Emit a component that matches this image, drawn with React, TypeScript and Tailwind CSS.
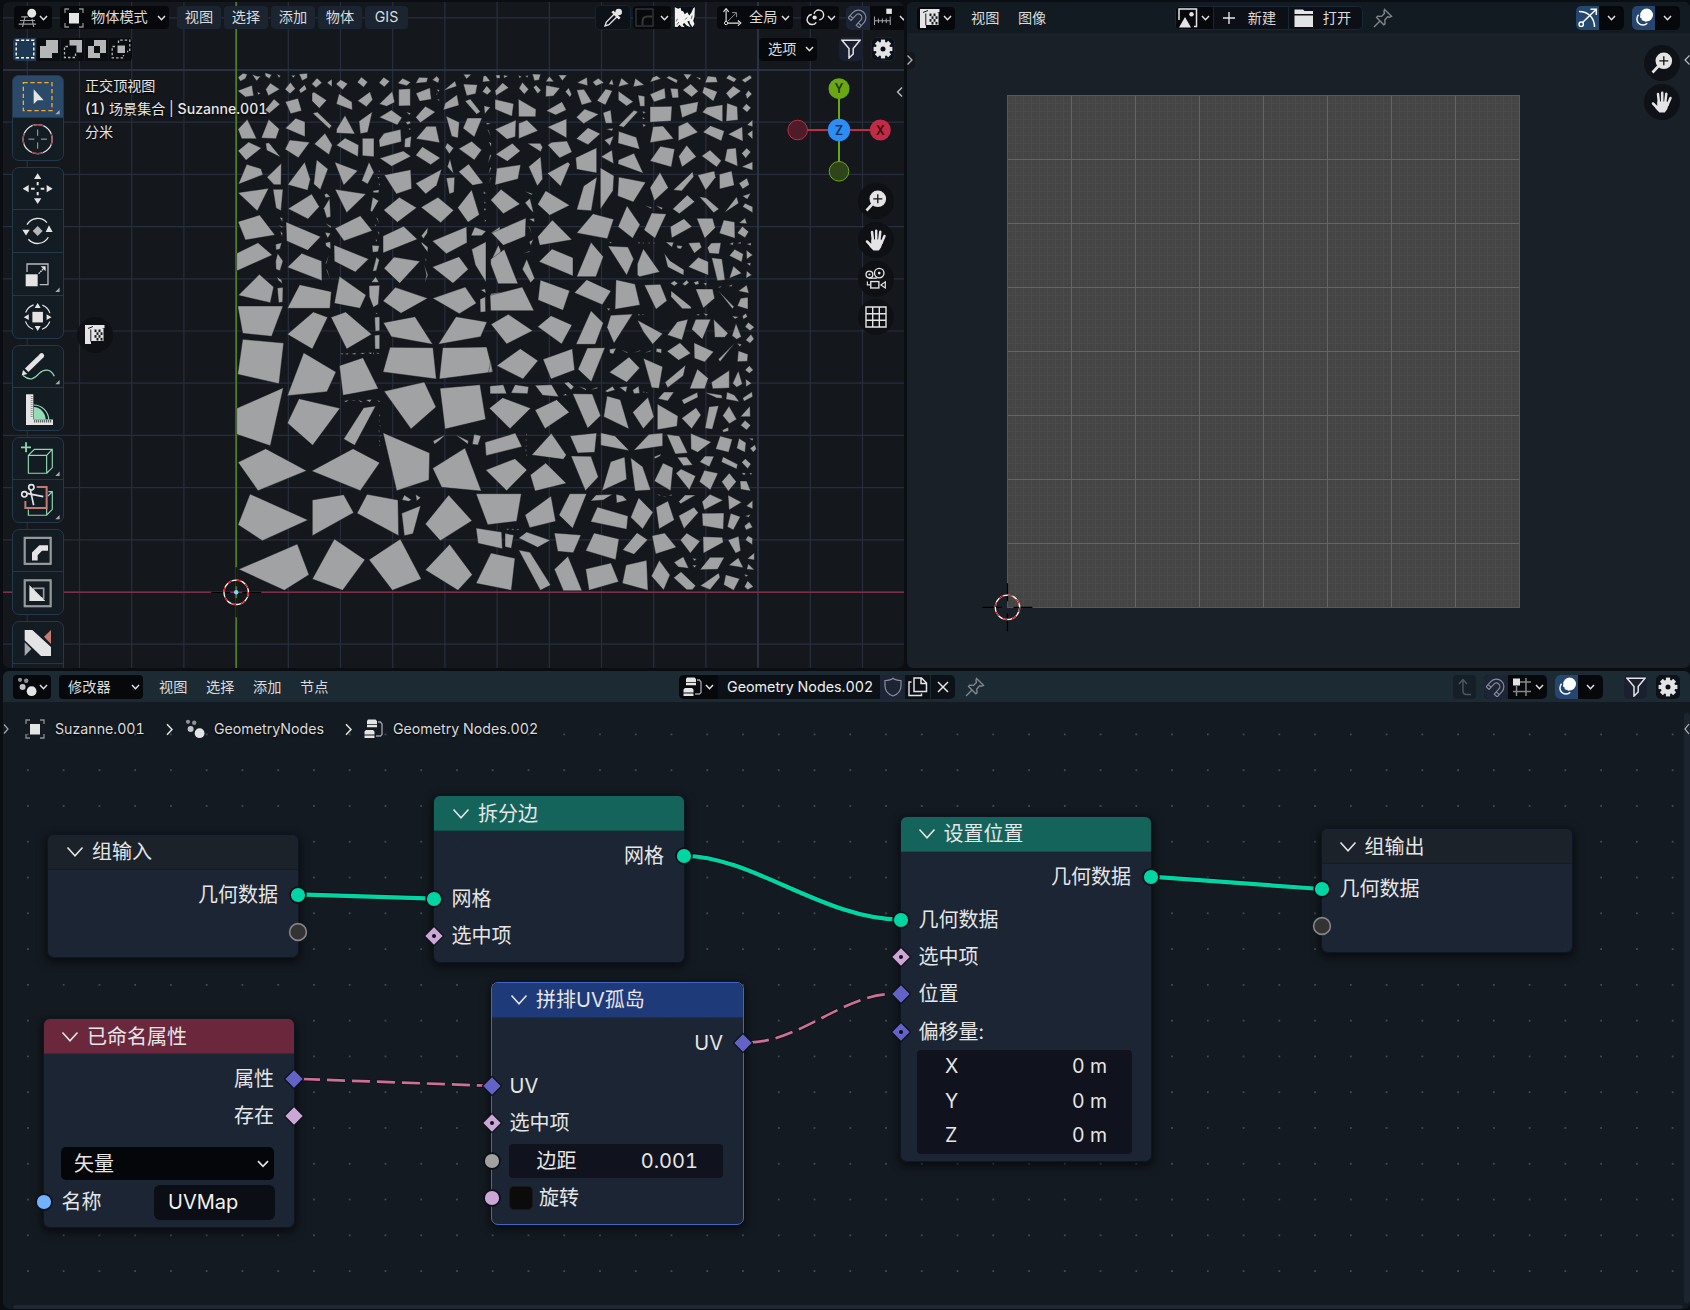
import type { ReactNode } from "react";

const INK = "#e4e4e4";

/* UV island outlines, grouped in four tiles; units are thirds of a pixel from each tile's origin. */
const TILE_A = `24,52 39,40 52,43 46,56 31,64|66,43 82,49 92,48 80,63|105,38 125,44 118,56 106,48|140,42 152,47 147,54|183,46 197,46 190,53|207,42 232,40 232,54 216,62 212,52|23,92 66,76 71,107 46,111|82,95 92,100 84,105|107,88 121,69 149,88 115,107|165,88 181,67 196,86 180,101|207,90 224,74 230,88 212,100|245,72 261,54 276,68 258,83|291,68 306,57 306,80|318,72 332,59 353,71 338,89|382,67 394,51 413,66 401,82|447,68 461,52 479,64 463,81|503,70 518,55 542,67 530,77|557,70 567,52 594,53 590,67|607,60 620,48 628,57 625,69|640,92 675,63 680,79|700,43 724,43 710,57|760,48 768,47 781,64 758,66|105,150 132,117 150,133 118,160|166,125 204,115 215,152 182,161|246,100 252,96 290,121 268,145 246,123|327,101 366,126 367,150 319,132|383,122 420,95 428,119 409,140|448,132 487,94 494,127 470,139|506,88 541,86 541,137 506,138|558,100 600,83 604,118 569,124|620,88 629,90 625,97|618,100 623,101 620,105|620,118 628,118 628,124|700,72 742,74 737,101 710,107|640,150 645,130 681,104 687,136|705,123 721,117 751,155 740,163|757,95 770,77 784,93 772,104|762,137 781,142 764,162|24,208 52,178 80,236 35,236|94,234 116,178 148,207 138,236|166,205 197,175 225,185 225,230|248,160 262,156 305,197 298,206|320,207 345,166 375,222 319,219|387,184 427,155 413,217 391,221|448,172 484,150 516,173 502,195|528,155 543,160 538,165|527,187 538,183 543,189 533,194|536,203 543,207 538,211|557,172 586,139 616,156 571,188|558,236 590,199 618,199 629,248|447,240 462,220 512,208 514,245 449,262|525,236 544,229 541,262 523,262|648,168 688,187 684,234 665,229|699,205 712,174 756,174 733,231|24,272 56,246 94,264 48,301|107,250 117,248 152,292 110,271|165,268 179,240 239,247 205,293|253,252 285,220 307,255 297,284|319,256 345,234 386,255 384,290|397,235 432,235 432,290 397,287|449,295 520,273 543,289 485,319|557,286 577,260 631,294 602,314|645,262 652,249 671,264 658,282|686,266 725,244 755,270 733,300|768,188 784,190 771,194|772,208 776,210 784,234|776,245 784,249 783,262|780,283 784,287 774,310|781,320 784,325 775,344|782,350 783,355 775,374|25,373 50,313 93,326 99,344|111,352 154,310 153,374 132,374|173,374 224,306 241,358 233,391|260,299 294,327 271,389 251,372|314,306 383,332 341,376|395,362 417,306 432,337 413,372|463,345 542,329 545,386 499,402|557,370 635,328 620,376 587,402|652,320 660,296 671,341|649,354 674,352 672,397 658,402|686,335 716,312 760,370 728,376|443,332 450,332 450,336|441,350 449,352 446,356|444,370 450,372 450,378|428,392 447,389 446,398 431,398|24,398 116,385 82,453|129,388 159,388 153,452 138,444|174,446 245,402 268,440 234,477|283,404 290,400 301,410 287,413|281,445 299,415 302,470 290,474|315,388 408,402 350,458|428,412 446,422 426,456 421,452|461,450 508,412 560,443 502,487|573,442 624,412 671,451 632,488|683,443 725,389 748,464 714,487|760,394 768,399 762,403|764,424 768,429 762,431|762,444 769,448 763,453|764,478 769,482 764,487|783,420 810,398 810,440|24,485 89,465 135,525 46,540|149,472 158,474 157,486|145,494 158,500 156,504|150,512 158,520 156,530|137,553 155,548 150,567 138,570|168,486 272,530 233,571 170,543|286,489 304,499 301,503|285,517 302,520 293,535|286,548 301,545 302,567 288,558|298,580 290,610 286,612|288,628 292,630 302,662|315,505 391,467 427,512 342,543|438,472 443,475 448,494|434,493 439,495 437,502|442,512 448,518 447,526|437,537 442,540 438,547|426,556 448,557 444,575 428,577|459,528 521,499 562,538 459,579|574,527 594,502 592,519 580,536|574,545 594,562 593,577 575,552|585,595 589,598 588,606|582,612 594,645 584,670 589,645|607,543 710,500 711,548 649,581|723,527 734,501 768,514 755,527|783,518 810,500 810,535|20,580 84,548 127,585 20,633|137,603 143,580 159,603 150,632 138,628|172,622 215,580 275,603 276,662|312,555 416,597 376,636 313,604|439,591 448,600 439,632 428,634|462,625 492,591 570,604 509,670|607,621 687,590 715,628 669,670|725,568 768,545 768,667 736,615|783,602 805,555 812,570 812,650|25,706 88,643 131,681 121,728|140,650 155,660 157,671 145,661|142,684 159,682 158,726 146,728|172,745 209,674 304,695 300,745|313,730 328,649 408,705 390,745|424,667 437,650 447,667|417,677 449,676 445,733 430,742 418,710|459,723 496,682 593,715 513,760|608,715 706,681 739,730 688,761|752,690 765,686 768,700|750,718 766,710 767,755 751,757|782,701 810,697 810,751 783,751|23,738 159,738 125,829 38,820|172,823 250,756 293,772 247,867|303,772 347,756 425,823 350,867|436,758 444,759 440,763|434,772 449,770 449,812 436,814|434,826 449,824 449,867 435,867|460,788 555,770 608,853 484,830|625,853 678,770 771,786 752,830`;

const TILE_B = `17,45 30,45 30,55 20,55|41,45 55,48 42,55|85,46 96,50 88,55|105,48 115,46 113,53|127,42 152,43 147,60 133,62|167,65 178,49 192,65|205,45 231,45 217,62|261,68 291,52 293,77|308,66 325,55 342,68 318,78|356,73 366,56 371,75|385,80 394,54 417,72|430,80 436,55 463,75|480,67 488,52 500,47 513,56|529,53 537,48 563,60 560,70|580,42 605,43 592,60|617,50 633,54 630,60|645,68 653,48 678,51 683,67|708,55 717,44 740,57 732,67|755,60 780,45 786,54 765,68|15,92 38,68 56,83 18,107|87,85 97,67 116,88 103,103|130,82 138,75 153,91 143,101|167,110 168,76 210,84 190,108|226,95 236,83 245,103 240,112|260,90 282,88 306,126 275,135|321,122 347,87 367,92 346,135|385,93 430,125 410,138 385,120|444,105 464,109 464,139 450,139|480,103 524,84 527,115 492,126|541,85 564,86 566,113 547,114|578,90 602,72 625,94 605,111|637,98 642,80 682,95 670,124|708,100 730,78 753,93 721,117|767,103 775,91 786,102 771,117|15,118 71,131 66,169 15,148|85,117 138,148 137,170 86,170|169,152 216,125 229,150 197,165|259,172 284,147 326,163 281,191|339,158 362,150 367,190 347,190|386,197 432,151 444,155 401,202|457,153 468,157 460,161|457,170 466,176 458,178|457,192 468,194 461,202|480,140 546,139 543,183 480,187|569,136 625,125 620,155 576,173|637,157 650,142 698,134 698,186|711,129 742,140 744,180 708,184|757,145 769,131 783,143 771,157|15,208 78,180 76,230 51,238|86,190 111,180 144,212 86,236|172,201 230,176 230,234|259,236 294,203 331,221 294,254|348,207 370,205 366,213|343,240 371,228 360,257|386,214 439,232 449,268 384,250|480,248 489,200 519,198 551,236|565,199 592,186 624,217 565,242|639,217 661,197 703,213 694,243|714,223 757,200 759,244|771,195 788,179 788,200|772,222 788,210 788,238|17,283 67,250 91,273 52,304|112,250 151,250 158,262 152,275|173,255 185,247 231,243 246,276 209,294|257,293 320,263 320,339 260,328|333,290 366,270 371,311|385,300 432,280 460,340 384,312|480,303 511,259 554,267 544,321|566,289 590,256 619,290 576,321|635,288 660,270 694,302 680,321|704,302 711,267 738,264 743,319|755,280 770,264 782,276 767,295|755,320 788,305 788,331|15,375 20,325 92,314 84,357|116,320 152,290 158,357 142,378|172,340 234,306 240,313 212,379|260,449 281,378 321,351 304,452|331,323 372,347 369,392 331,448|386,351 467,367 430,426 383,408|480,383 510,337 535,383 493,422|550,390 608,335 611,350 575,393|623,345 673,333 677,352 647,391|688,343 725,333 733,376 689,387|747,370 771,354 778,374 758,387|2,420 33,388 90,432 40,461|103,393 128,401 124,405|105,428 120,415 131,459 122,450|143,433 167,392 239,436 179,466|463,436 485,442 484,446|497,436 518,443 515,449|548,447 592,405 614,425 568,461|628,410 648,413 687,447 671,458|703,458 740,410 746,430|757,408 782,400 772,418|758,440 765,430 788,440 788,458|5,519 108,474 106,529 40,556|117,477 133,475 133,487|115,497 119,500 126,524|118,545 130,538 122,557|97,581 120,572 119,576|143,530 187,480 246,539 149,556|260,519 309,461 371,478 352,536|384,500 411,437 450,494 428,535|462,510 485,459 529,462 495,535|541,500 582,476 606,500 545,534|620,475 668,475 676,503 644,535|688,520 701,480 734,486 735,535|747,489 765,474 771,491|742,519 757,499 776,515 765,533|355,545 367,547 362,550|443,547 450,547 448,552|457,547 463,549 460,551|475,547 481,549 477,552|488,547 495,549 492,552|527,546 551,547 546,562|560,556 578,558 572,567 562,565|595,549 629,547 635,562 613,580|652,563 664,549 693,548 687,582 658,580|718,552 730,546 729,556|742,550 752,545 753,552|770,552 783,548 783,557|2,598 43,568 84,671 24,671 2,612|97,628 110,597 134,655 122,668|147,605 186,567 249,593 249,648|260,650 303,547 340,590 318,650|354,558 414,561 431,597 410,646|442,612 460,566 509,636 449,650 442,645|523,580 540,602 582,629 581,646 533,621|595,621 625,592 655,605 655,646|665,593 696,597 705,660 682,662|718,587 734,568 760,582 755,606|769,570 788,585 770,598|770,610 783,608 780,618|718,655 730,618 755,640|768,655 770,632 785,645|2,752 0,706 97,681 132,752|144,720 151,660 239,692 219,751|253,698 290,659 363,693 337,734|350,745 361,745 357,752|375,748 378,659 435,672 450,735|463,675 511,673 531,722 498,748|541,670 553,662 564,670 553,678|577,672 590,660 597,668 585,677|611,667 625,662 627,672 617,675|640,670 651,668 648,677|543,692 603,740 604,746 577,746 543,710|617,687 668,687 674,715 640,744|683,683 696,676 690,683|715,678 728,673 724,680|683,690 732,740 727,746|745,693 770,675 777,700|742,738 752,715 774,712 774,748|3,793 55,763 128,812 50,852|143,800 183,767 246,795 215,852|258,853 303,752 340,789 316,853|351,802 362,766 428,762 372,850|442,780 518,821 488,853 460,815|532,825 562,785 594,778 576,840|605,808 617,778 662,778 637,838|671,778 714,820 704,832 674,832|726,827 738,790 754,830 740,838|443,762 450,763 447,767|455,762 464,764 458,766|618,762 630,763 625,767|640,760 655,763 648,768|726,768 747,770 735,777|757,768 768,760 772,770 760,778|765,800 775,787 793,802 780,812`;

const TILE_C = `38,58 161,69 147,191 23,163|172,227 221,98 318,156 291,215|328,137 399,113 445,206 339,226|328,100 340,100 338,104|344,101 357,99 352,104|363,101 378,98 376,104|388,99 407,98 398,103|414,98 426,97 422,103|430,95 433,103 429,103|437,98 448,99 445,103|459,156 480,82 609,83 619,177|628,177 638,83 770,81 789,156|20,265 160,203 121,377 20,343|172,309 207,236 330,265 248,376|342,243 357,239 348,247|362,243 378,239 372,243|382,238 399,246 392,247|407,240 425,238 420,247|440,240 450,243 448,247|341,357 401,263 437,258 374,376|447,283 451,285 448,292|446,300 449,302 449,308|447,315 452,317 451,321|446,329 449,332 447,339|449,345 452,346 450,353|446,360 450,362 448,368|448,373 451,376 449,381|462,214 583,186 618,261 543,327|630,205 750,194 767,298 645,327|779,200 810,197 810,221 782,221|609,363 648,343 630,360 614,373|674,343 715,362 714,373|732,343 753,347 744,375 727,373|24,427 107,386 230,452 84,512|245,453 369,386 449,428 391,512|459,338 599,399 597,480 500,512|608,445 705,384 754,513 635,502|24,614 60,522 234,600 97,662|247,540 341,524 371,578 247,647|381,580 411,523 504,540 506,647|516,540 523,525 545,540 535,544|557,523 572,533 560,543|515,580 572,557 549,641 523,647|586,612 656,525 726,602 631,662|26,748 202,672 237,764 163,811|247,777 313,657 405,719 338,811|417,719 511,657 574,777 487,811|586,750 659,673 727,764 684,811`;

const TILE_D = `-2,265 38,233 122,265 60,326|-15,367 76,339 96,380 -12,407|-13,450 75,416 111,450 50,512|-42,521 94,521 80,604 -7,614|-42,624 0,631 35,636 37,686 -36,670|-42,790 3,699 75,715 64,811|20,137 91,86 144,122 99,177|2,118 7,155 -5,158 0,137|159,118 247,86 254,150 183,177|264,148 292,84 345,83 304,185|358,157 417,111 449,144 410,187|460,115 518,140 507,205 485,203|525,187 587,135 580,167 533,203|358,88 378,85 370,102 360,100|391,88 413,97 412,100|428,99 453,90 450,94|462,98 486,90 480,95|500,85 515,87 514,100 498,95|531,94 570,68 602,100 566,121|612,68 671,95 644,126 613,115|685,118 735,68 690,125|741,70 755,73 750,80|742,125 745,92 774,103 772,124|599,206 622,147 655,175 644,206|664,187 718,151 718,204 668,206|728,190 745,152 757,192 740,202|765,150 778,137 790,150 778,160|767,177 785,190 768,200|0,198 40,194 50,221 0,221|63,219 75,194 116,200 113,221|135,196 185,194 206,230 158,226|222,188 236,186 252,200 243,210|218,227 226,221 233,226|264,198 289,206 287,211|300,209 325,200 320,206|345,213 368,199 375,210 352,217|388,202 412,199 408,217|428,210 446,198 449,220 432,221|459,213 465,217 461,219|468,216 474,217 470,220|135,270 200,239 238,277 165,326|248,221 307,222 332,287 293,325|341,290 351,228 391,239 417,327|428,277 474,232 492,290 460,326|502,252 564,288 561,319 502,329|504,236 522,216 552,216 533,243|575,240 622,217 624,232 582,253|575,295 618,263 633,285 605,326|645,325 657,260 686,257 667,328|643,217 695,225 697,235 680,234|708,238 711,216 733,225 748,245|758,234 786,215 788,230 762,244|698,287 717,258 740,298 718,311|751,290 780,258 781,290|752,316 765,301 782,316 770,330|697,330 715,322 716,333 700,337|125,405 184,340 229,405 220,418|240,347 320,339 314,397 263,399|332,338 375,348 418,392 332,376|431,391 477,343 518,339 518,378|530,343 568,348 593,399 556,402|602,340 664,366 623,397 603,387|677,387 690,348 727,358 716,397|740,385 747,355 768,368 765,397|780,385 795,374 799,387 790,397|776,355 790,355 788,362|108,340 111,343 109,350|106,357 111,360 108,364|108,375 111,378 107,380|105,388 110,390 108,395|109,402 112,405 109,410|121,465 167,429 229,490 135,513|243,408 303,409 325,471 286,512|336,512 362,425 404,411 410,478|422,413 458,440 482,510 435,513|492,410 513,402 511,408 495,416|493,483 519,429 549,443 542,512|558,460 573,447 617,468 598,510|562,412 590,411 608,435 580,437|629,426 645,408 672,409 658,440|628,485 643,451 684,460 661,510|694,426 699,410 743,433 740,447|695,485 718,459 739,485 715,514|755,427 766,416 783,432 773,446|755,460 762,458 768,461 762,466|777,459 787,459 783,465|750,483 770,483 782,513 752,508|105,585 183,528 197,604 119,623|207,585 239,521 290,521 248,625|302,543 318,525 368,523 340,540|378,523 398,527 411,541 380,549|302,605 322,561 414,588 410,628|422,592 446,533 489,577 458,627|498,562 534,543 553,600 507,627|566,545 585,525 617,525 572,551|566,587 612,562 625,578 582,626|498,523 510,524 512,528|515,527 530,530 527,532|533,527 547,523 545,527|636,545 660,523 699,541 643,570|636,580 702,579 700,628 638,617|714,525 755,547 717,570|712,620 722,580 751,590 730,630|769,558 788,541 788,567|765,588 782,583 776,592|763,618 778,605 788,622 768,630|48,626 58,626 54,631|63,626 73,627 69,631|78,627 88,627 84,631|45,640 71,645 64,685 45,680|86,654 110,636 181,661 143,682|193,639 273,645 250,698 203,694|287,692 312,639 387,657 377,719|398,690 441,638 473,659 432,703|486,647 524,639 559,682 497,702|571,660 590,639 630,664 601,700|639,650 697,652 700,667 640,700|714,660 746,649 752,692 737,700|766,660 774,647 788,655 787,674|86,690 120,697 182,795 151,811|193,748 234,709 276,812 220,812|287,747 363,729 386,785 297,811|397,790 408,735 470,721 474,811|484,768 508,721 540,765 521,810|552,727 580,710 596,745 565,741|607,714 620,717 613,723|607,736 620,735 614,743|551,773 573,755 617,797 607,809 590,809|630,749 660,712 703,712 683,748|631,797 686,759 690,772 660,809|701,794 707,764 749,776 731,811|716,736 745,713 760,743|772,716 793,698 793,720|770,748 775,731 793,750|762,762 775,766 768,771|763,800 773,782 790,800 773,809|767,60 783,43 792,57 780,70`;

const TILES = [
  { x: 230, y: 60, data: TILE_A },
  { x: 490, y: 60, data: TILE_B },
  { x: 230, y: 320, data: TILE_C },
  { x: 490, y: 320, data: TILE_D },
];

function Icon({ box, w, h, children, className = "" }: { box: string; w: number; h: number; children: ReactNode; className?: string }) {
  return (
    <svg viewBox={box} width={w} height={h} fill="none" className={`shrink-0 ${className}`}>
      {children}
    </svg>
  );
}

function Chevron({ className = "" }: { className?: string }) {
  return (
    <Icon box="0 0 9 6" w={9} h={6} className={className}>
      <path d="M1 1L4.5 4.7L8 1" stroke={INK} strokeWidth="1.4" />
    </Icon>
  );
}

function ObjectIcon() {
  return (
    <Icon box="0 0 20 20" w={20} h={20}>
      <path d="M1 5V1H5M15 1H19V5M19 15V19H15M5 19H1V15" stroke="#8b8f93" strokeWidth="1.3" />
      <rect x="5" y="5" width="10" height="10.5" fill={INK} />
    </Icon>
  );
}

function FilterIcon() {
  return (
    <Icon box="0 0 20 20" w={20} h={20}>
      <path d="M1 1.2H19L12.2 9.5V15L8 19V9.5Z" stroke={INK} strokeWidth="1.5" />
    </Icon>
  );
}

function GearIcon() {
  return (
    <Icon box="-10 -10 20 20" w={20} h={20}>
      {[0, 45, 90, 135].map((a) => (
        <rect key={a} x="-2.1" y="-9.4" width="4.2" height="18.8" fill={INK} transform={`rotate(${a})`} />
      ))}
      <circle r="4.9" stroke={INK} strokeWidth="4.8" fill="#0a0e13" />
    </Icon>
  );
}

function MagnetIcon() {
  return (
    <Icon box="0 0 20 20" w={20} h={20}>
      <g transform="rotate(42 10 10)" stroke="#858b96" strokeWidth="1.2">
        <path d="M2.5 16.5V9.5A7.5 7.5 0 0 1 17.5 9.5V16.5H13.5V9.5A3.5 3.5 0 0 0 6.5 9.5V16.5Z" />
        <path d="M2.5 13.5H6.5M13.5 13.5H17.5" />
      </g>
    </Icon>
  );
}

function PinIcon() {
  return (
    <Icon box="0 0 20 20" w={20} h={20}>
      <path d="M11.5 1.5L18.5 8.3L16.5 9.3L14.6 8.8L11.8 12L12 16L10.8 16.8L3.6 9.4L4.6 8.3L8.5 8.4L11.4 5.5L11 3.2ZM7 13L1 19" stroke="#81868b" strokeWidth="1.4" />
    </Icon>
  );
}

function OverlayIcon() {
  return (
    <Icon box="0 0 22 22" w={22} h={22}>
      <circle cx="13.6" cy="8" r="6.4" fill="#fff" />
      <path d="M5.6 7.8A6 6 0 1 0 14.2 16.2" stroke="#fff" strokeWidth="1.5" />
      <path d="M7.6 9A5.6 5.6 0 0 0 12.8 14.2" stroke="#fff" strokeWidth="1.1" strokeDasharray="2 1.4" />
    </Icon>
  );
}

function NodesIcon() {
  return (
    <Icon box="0 0 20 20" w={20} h={20}>
      <circle cx="3" cy="2.8" r="2.1" fill="#8d9095" />
      <circle cx="9.2" cy="3.8" r="2.2" fill="#8d9095" />
      <circle cx="5.6" cy="10" r="3" fill="#c0c2c4" />
      <circle cx="14.6" cy="14.2" r="4.9" fill={INK} />
    </Icon>
  );
}

function GroupIcon() {
  return (
    <Icon box="0 0 20 20" w={20} h={20}>
      <path d="M4 0.5H11.5L13 2V5H3V2Z M3 5.8H13V8.2H3Z" fill={INK} />
      <path d="M2 11H9L10.5 12.5V15.5H0.5V12.5Z M0.5 16.5H10.5V19H0.5Z" fill={INK} />
      <path d="M14 3H16.5L18 5V15.5L16.5 17H12" stroke="#999da1" strokeWidth="1.4" />
    </Icon>
  );
}

function UvIcon() {
  return (
    <Icon box="0 0 20 19" w={20} h={19}>
      <path d="M0 0H19.5V3L14 5V16H6V19H0Z" fill={INK} />
      <path d="M3 3.5L8 1.5" stroke="#15191e" strokeWidth="1" />
      <rect x="7" y="4" width="11.5" height="12" fill={INK} />
      {[0, 1, 2, 3].map((r) => [0, 1].map((c) => <rect key={`${r}${c}`} x={9.5 + c * 4 + (r % 2) * 2} y={4.5 + r * 2.8} width="2" height="2.6" fill="#15191e" />))}
      <path d="M5.8 4.5V16.5" stroke="#15191e" strokeWidth="1" />
    </Icon>
  );
}

function ZoomIcon() {
  return (
    <Icon box="0 0 22 22" w={22} h={22}>
      <circle cx="12.8" cy="8.8" r="8.3" fill={INK} />
      <path d="M7.5 14L1.5 20.5" stroke={INK} strokeWidth="2.6" />
      <path d="M12.8 4.3V13.3M8.3 8.8H17.3" stroke="#111" strokeWidth="1.3" />
    </Icon>
  );
}

function HandIcon() {
  return (
    <Icon box="0 0 22 22" w={22} h={22}>
      <g stroke={INK} strokeWidth="2.5" strokeLinecap="round">
        <path d="M7 3L8 12M11.2 1.8V12M15.3 2.8L14.2 12M19.5 7L16.5 14M2 12.5L6.5 17" />
      </g>
      <path d="M6.2 10.5H16L18 13L16 18.5L13.8 21.5H8.5L5 18L3 14.5L6.2 15Z" fill={INK} />
    </Icon>
  );
}

function RoundButton({ children }: { children: ReactNode }) {
  return <div className="flex h-[36px] w-[36px] items-center justify-center rounded-full bg-[#0d1014]/90">{children}</div>;
}

function MenuChip({ children, w }: { children: ReactNode; w: string }) {
  return <div className={`flex h-[23px] items-center justify-center rounded-[4px] bg-[#1b2531] ${w}`}>{children}</div>;
}

/* ---------- 3D viewport ---------- */

function ViewportCanvas() {
  const steps = Array.from({ length: 18 }, (_, i) => i);
  return (
    <svg className="absolute inset-0" width="901" height="666" viewBox="3 2 901 666">
      <g stroke="#262e3e" strokeWidth="1.2">
        {steps.map((i) => (
          <path key={`v${i}`} d={`M${27.3 + i * 52.2} 2V668`} />
        ))}
        {steps.slice(0, 13).map((i) => (
          <path key={`h${i}`} d={`M3 ${17.8 + i * 52.2}H904`} />
        ))}
      </g>
      <path d="M758 2V668M3 70H904" stroke="#2d364a" strokeWidth="1.6" />
      <path d="M3 592.3H904" stroke="#7f2c46" strokeWidth="1.6" />
      <path d="M236.2 2V668" stroke="#4f7a26" strokeWidth="1.8" />
      {TILES.map((t) => (
        <g key={`${t.x}-${t.y}`} transform={`translate(${t.x} ${t.y}) scale(0.33333)`} fill="#a1a2a3" stroke="#0d0f12" strokeWidth="1.2">
          {t.data.split("|").map((p, i) => (
            <polygon key={i} points={p} />
          ))}
        </g>
      ))}
      <g transform="translate(236.2 592.3)" fill="none">
        <path d="M-25 0H-6M6 0H25M0 -25V-6M0 6V25" stroke="#000" strokeWidth="1.2" />
        <circle r="12.2" stroke="#fff" strokeWidth="1.3" />
        <circle r="12.2" stroke="#f00c0c" strokeWidth="1.3" strokeDasharray="4.8 4.8" />
        <circle r="2.2" fill="#7fd4ff" />
      </g>
      <g fontFamily="Inter" fontSize="12.5" fontWeight="600" textAnchor="middle">
        <path d="M839 89V171" stroke="#6aa813" strokeWidth="2" />
        <path d="M798 130H880" stroke="#c22b45" strokeWidth="2" />
        <circle cx="797.7" cy="130" r="9.8" fill="#4d1c28" stroke="#c22b45" />
        <circle cx="839" cy="171.3" r="9.8" fill="#2f4418" stroke="#6aa813" />
        <circle cx="839" cy="88.7" r="10.5" fill="#6aa813" />
        <circle cx="880.3" cy="130" r="10.5" fill="#c22b45" />
        <circle cx="839" cy="130" r="11.2" fill="#2c8df5" />
        <text x="839" y="93.2" fill="#22370a">Y</text>
        <text x="839" y="134.6" fill="#0f3158">Z</text>
        <text x="880.3" y="134.6" fill="#3d0c15">X</text>
      </g>
      <path d="M902 87.5L897.5 92L902 96.5" stroke="#c5c8cb" strokeWidth="1.2" fill="none" />
    </svg>
  );
}

const corner = (y: number) => <path d={`M180 ${y - 13}V${y}H167Z`} fill="#a9abad" />;

const TOOL_GROUPS: { box: string; active?: boolean; art: ReactNode }[][] = [
  [
    {
      box: "37 225 153 128",
      active: true,
      art: (
        <>
          <rect x="71" y="248" width="86" height="84" stroke="#f2aa32" strokeWidth="4" strokeDasharray="13 8" />
          <path d="M102 268V312L114 301H132Z" fill={INK} />
          {corner(343)}
        </>
      ),
    },
    {
      box: "37 353 153 129",
      art: (
        <>
          <circle cx="114" cy="417" r="44" stroke={INK} strokeWidth="4" />
          <circle cx="114" cy="417" r="44" stroke="#a8404a" strokeWidth="4" strokeDasharray="34.5 34.5" strokeDashoffset="17" />
          <path d="M86 417H104M124 417H142M114 388V407M114 427V446" stroke="#a9acae" strokeWidth="3" />
        </>
      ),
    },
  ],
  [
    {
      box: "37 502 153 128",
      art: (
        <>
          <path d="M114 521L103 538H125ZM114 613L103 596H125ZM69 567L87 556V578ZM159 567L141 556V578Z" fill={INK} />
          <path d="M114 547V557M114 577V587M94 567H105M123 567H134" stroke={INK} strokeWidth="6" />
        </>
      ),
    },
    {
      box: "37 630 153 128",
      art: (
        <>
          <path d="M114 678L129 693L114 708L99 693Z" fill="#b5b6b8" />
          <path d="M82 674A37 37 0 0 1 142 668M146 712A37 37 0 0 1 86 718" stroke={INK} strokeWidth="4" />
          <path d="M68 689H90L79 707ZM148 676L138 696H159Z" fill={INK} />
        </>
      ),
    },
    {
      box: "37 758 153 128",
      art: (
        <>
          <path d="M82 815V791H145V853H120" stroke="#b9babc" strokeWidth="4" />
          <rect x="78" y="822" width="36" height="36" fill={INK} />
          <path d="M117 820L134 803" stroke={INK} strokeWidth="4" strokeDasharray="5 2" />
          <path d="M138 798V813L123 798Z" fill={INK} />
          {corner(875)}
        </>
      ),
    },
    {
      box: "37 887 153 129",
      art: (
        <>
          <circle cx="114" cy="951" r="39" stroke={INK} strokeWidth="3.5" strokeDasharray="34 27.2" strokeDashoffset="-13.6" />
          <rect x="98" y="935" width="32" height="32" fill={INK} />
          <path d="M114 908L105 923H123ZM114 993L105 978H123ZM72 951L87 942V960ZM156 951L141 942V960Z" fill={INK} />
        </>
      ),
    },
  ],
  [
    {
      box: "37 45 153 128",
      art: (
        <>
          <path d="M81 121L119 84" stroke={INK} strokeWidth="15" />
          <path d="M122 81L126 77" stroke={INK} strokeWidth="15" strokeLinecap="round" />
          <path d="M66 137L70 120L83 132Z" fill={INK} />
          <path d="M70 137C92 156 106 144 118 131C134 115 154 117 164 139" stroke="#8fd8b0" strokeWidth="4" />
          {corner(163)}
        </>
      ),
    },
    {
      box: "37 173 153 128",
      art: (
        <>
          <path d="M102 230A38 38 0 0 1 138 268H102Z" fill="#93dcb5" />
          <path d="M102 224A46 44 0 0 1 147 268" stroke="#93dcb5" strokeWidth="3.5" />
          <path d="M79 192H101V268H160V284H79Z" fill={INK} />
          <path d="M96 198V264" stroke="#3a3f44" strokeWidth="6" strokeDasharray="1.5 4.5" />
          <path d="M104 273H158" stroke="#23282d" strokeWidth="8" strokeDasharray="2.5 3.5" />
        </>
      ),
    },
  ],
  [
    {
      box: "37 321 153 128",
      art: (
        <>
          <path d="M79 337V367M64 352H94" stroke="#8fd8b0" strokeWidth="5.5" />
          <path d="M86 376H141V430H86ZM86 376L104 358H158V413L141 430M141 376L158 358" stroke="#8fd8b0" strokeWidth="3.5" />
          {corner(438)}
        </>
      ),
    },
    {
      box: "37 449 153 128",
      art: (
        <>
          <path d="M86 538V555H141L158 537V484H146M141 555V535M145 497L158 484" stroke="#8fd8b0" strokeWidth="3.5" />
          <path d="M111 470H141V533H77V512" stroke="#c57b72" strokeWidth="6" />
          <circle cx="95" cy="471" r="8" stroke={INK} strokeWidth="5" />
          <circle cx="74" cy="492" r="8" stroke={INK} strokeWidth="5" />
          <path d="M92 479L102 525M82 489L131 499" stroke={INK} strokeWidth="5" />
          {corner(567)}
        </>
      ),
    },
  ],
  [
    {
      box: "37 598 153 127",
      art: (
        <>
          <rect x="75" y="624" width="78" height="78" stroke="#b4b6b8" strokeWidth="6" />
          <rect x="75" y="624" width="78" height="78" stroke="#777a7d" strokeWidth="1.5" />
          <path d="M97 692V668L119 646H145V663H127L114 676V692Z" fill={INK} />
        </>
      ),
    },
    {
      box: "37 725 153 128",
      art: (
        <>
          <rect x="75" y="750" width="78" height="78" stroke="#b4b6b8" strokeWidth="6" />
          <rect x="75" y="750" width="78" height="78" stroke="#777a7d" strokeWidth="1.5" />
          <rect x="102" y="774" width="30" height="30" stroke="#999b9e" strokeWidth="5" />
          <path d="M89 764V812H137Z" fill={INK} />
        </>
      ),
    },
  ],
  [
    {
      box: "37 873 153 128",
      art: (
        <>
          <path d="M75 900H98L154 951V978H124L75 931Z" fill={INK} />
          <path d="M75 937L95 957L75 978Z" fill="#a9acae" />
          <path d="M154 900V942L133 920Z" fill="#c57b72" />
        </>
      ),
    },
    { box: "0 0 10 10", art: null },
  ],
];

function Toolbar() {
  return (
    <div className="ml-[9px] mt-[14px] flex h-[593px] w-[52px] flex-col gap-[6px] overflow-hidden">
      {TOOL_GROUPS.map((g, i) => (
        <div key={i} className="flex shrink-0 flex-col divide-y divide-[#24384b] overflow-hidden rounded-[7px] outline-1 -outline-offset-1 outline-[#24384b]">
          {g.map((t, j) => (
            <div key={j} className={`flex h-[43px] ${t.active ? "bg-[#2b4a69]" : "bg-[#131b23]"}`}>
              <Icon box={t.box} w={51} h={42.6}>
                {t.art}
              </Icon>
            </div>
          ))}
        </div>
      ))}
    </div>
  );
}

function ViewportHeader() {
  return (
    <div className="flex h-[27px] items-center pl-[11px] pt-[4px]">
      <div className="flex h-[23px] w-[38px] items-center justify-center gap-[2px] rounded-[4px] bg-[#06080b]">
        <Icon box="58 22 58 58" w={19} h={19}>
          <path d="M60 71H113M68 49H88M80 47L72 80M101 55L106 80M64 60H110" stroke="#9a9da0" strokeWidth="3.5" />
          <circle cx="100" cy="38" r="13.5" fill={INK} />
        </Icon>
        <Chevron />
      </div>
      <div className="ml-[8px] flex h-[23px] w-[109px] items-center rounded-[4px] bg-[#06080b] pl-[4px]">
        <ObjectIcon />
        <span className="ml-[7px]">物体模式</span>
        <Chevron className="ml-auto mr-[3px]" />
      </div>
      <div className="ml-[8px] flex gap-[3px]">
        <MenuChip w="w-[44px]">视图</MenuChip>
        <MenuChip w="w-[44px]">选择</MenuChip>
        <MenuChip w="w-[44px]">添加</MenuChip>
        <MenuChip w="w-[44px]">物体</MenuChip>
        <MenuChip w="w-[43px]">GIS</MenuChip>
      </div>
      <div className="ml-auto flex items-center">
        <div className="flex h-[25px] w-[36px] items-center justify-center rounded-[4px] border border-[#18222e] bg-[#0d1218]">
          <Icon box="130 24 60 60" w={20} h={20}>
            <path d="M136 78L140 66L164 42L172 50L148 74Z" stroke={INK} strokeWidth="4" />
            <path d="M158 34L180 56M166 44L180 31" stroke={INK} strokeWidth="8" />
            <circle cx="177" cy="36" r="10" fill={INK} />
          </Icon>
        </div>
        <div className="ml-[2px] flex h-[23px] w-[38px] items-center justify-between rounded-[4px] bg-[#07090c] pl-[2px] pr-[2px]">
          <Icon box="224 24 58 58" w={19} h={19}>
            <rect x="227" y="27" width="52" height="52" stroke="#36393c" strokeWidth="4" />
            <path d="M247 76V66Q247 50 262 50H277" stroke="#36393c" strokeWidth="6" />
          </Icon>
          <Chevron />
        </div>
        <div className="ml-[2px] flex h-[24px] w-[23px] items-center justify-center rounded-[4px] border border-[#151d28] bg-[#0b0f14]">
          <Icon box="340 22 66 64" w={22} h={21}>
            <path d="M342 23L352 27L360 24L361 33L368 36L372 44L380 38L386 48L393 38L398 26L403 23L402 52L398 64L402 74L396 84L388 72L386 64L380 66L390 84L378 78L370 70L366 76L372 83L362 82L356 76L350 83L342 82Z" fill="#f2f2f2" />
            <path d="M346 66L350 58M348 76L354 68M374 60L379 54M392 58L395 48" stroke="#15181c" strokeWidth="2" />
          </Icon>
        </div>
        <div className="ml-[21px] flex h-[23px] w-[76px] items-center rounded-[4px] bg-[#07090c] pl-[5px] pr-[3px]">
          <Icon box="484 24 60 58" w={20} h={19}>
            <path d="M496 32V70H536" stroke={INK} strokeWidth="3.5" />
            <path d="M488 36L496 26L504 36M532 62L541 70L532 78" stroke={INK} strokeWidth="3.5" />
            <path d="M502 64L526 40M514 38H528V52" stroke="#8e9195" strokeWidth="3" />
            <circle cx="496" cy="70" r="5" stroke={INK} strokeWidth="3" fill="#07090c" />
          </Icon>
          <span className="ml-[7px]">全局</span>
          <Chevron className="ml-auto" />
        </div>
        <div className="ml-[8px] flex h-[23px] w-[38px] items-center justify-center gap-[2px] rounded-[4px] bg-[#07090c]">
          <Icon box="736 24 62 58" w={20} h={19}>
            <path d="M757 44A15.5 15.5 0 1 0 771 68M764 42A15 15 0 1 1 780 60" stroke={INK} strokeWidth="4.5" />
            <circle cx="766" cy="53" r="6.5" fill={INK} />
          </Icon>
          <Chevron />
        </div>
        <div className="ml-[7px] flex h-[24px] w-[58px] items-center overflow-hidden rounded-l-[5px] bg-[#07090c]">
          <div className="flex h-full w-[24px] shrink-0 items-center justify-center bg-[#1c2436]">
            <MagnetIcon />
          </div>
          <Icon box="940 22 60 58" w={20} h={19} className="ml-[3px]">
            <rect x="980" y="24" width="17" height="16" fill={INK} />
            <path d="M943 61H993M944 48V74M956 54V68M968 54V68M980 54V68M992 48V74" stroke="#a5a8ab" strokeWidth="3" />
          </Icon>
          <Chevron className="ml-[6px]" />
        </div>
      </div>
    </div>
  );
}

function SelectModes() {
  const cell = "flex h-[23px] w-[23px] items-center justify-center";
  return (
    <div className="flex gap-px overflow-hidden rounded-[4px]">
      <div className={`${cell} bg-[#1d3852]`}>
        <Icon box="0 0 20 20" w={20} h={20}>
          <rect x="1.2" y="1.2" width="17.6" height="17.6" stroke="#fff" strokeWidth="1.4" strokeDasharray="3 2" />
        </Icon>
      </div>
      <div className={`${cell} bg-[#0a0d10]`}>
        <Icon box="0 0 20 20" w={20} h={20}>
          <path d="M7 1H19V14H13V19H1V7H7Z" fill="#b4b5b6" />
        </Icon>
      </div>
      <div className={`${cell} bg-[#0a0d10]`}>
        <Icon box="0 0 20 20" w={20} h={20}>
          <path d="M6.5 1H19V13.5H13.5V6.5H6.5Z" fill="#b4b5b6" />
          <path d="M5 7.5H1.5V18.5H12.5V14.5" stroke="#b4b5b6" strokeWidth="1.3" strokeDasharray="2.5 2" />
        </Icon>
      </div>
      <div className={`${cell} bg-[#0a0d10]`}>
        <Icon box="0 0 20 20" w={20} h={20}>
          <path fillRule="evenodd" d="M7 1H19V14H13V19H1V7H7ZM7 7V14H13V7Z" fill="#b4b5b6" />
        </Icon>
      </div>
      <div className={`${cell} bg-[#0a0d10]`}>
        <Icon box="0 0 20 20" w={20} h={20}>
          <path d="M7.5 4V1.2H18.8V12.5H16M4 7.5H1.2V18.8H12.5V16" stroke="#b4b5b6" strokeWidth="1.3" strokeDasharray="2.5 2" />
          <rect x="6.5" y="6.5" width="7.5" height="7.5" fill="#b4b5b6" />
        </Icon>
      </div>
    </div>
  );
}

function Viewport() {
  return (
    <section className="relative h-[666px] w-[901px] shrink-0 overflow-hidden rounded-[6px] bg-[#14171c]">
      <ViewportCanvas />
      <div className="relative flex flex-col">
        <ViewportHeader />
        <div className="mt-[8px] flex h-[24px] items-center pl-[10px]">
          <SelectModes />
          <div className="ml-auto flex h-[23px] w-[58px] items-center rounded-[4px] bg-[#06080b] pl-[9px] pr-[3px]">
            选项
            <Chevron className="ml-auto" />
          </div>
          <div className="ml-[22px] flex h-[24px] w-[24px] items-center justify-center rounded-[5px] bg-[#1a2030]">
            <FilterIcon />
          </div>
          <div className="ml-[8px] mr-[9px] flex h-[24px] w-[24px] items-center justify-center rounded-[5px] border border-[#18222e] bg-[#0d1218]">
            <GearIcon />
          </div>
        </div>
        <div className="flex">
          <Toolbar />
          <div className="ml-[21px] mt-[13px] flex flex-col text-[14.1px] leading-[23px] text-[#e6e6e6] [text-shadow:0_1px_2px_#000]">
            <span>正交顶视图</span>
            <span className="whitespace-nowrap">
              <span className="font-medium">(1)</span> 场景集合 | <span className="font-medium">Suzanne.001</span>
            </span>
            <span>分米</span>
            <div className="ml-[-8px] mt-[173.5px]">
              <RoundButton>
                <UvIcon />
              </RoundButton>
            </div>
          </div>
          <div className="ml-auto mr-[10.5px] mt-[122px] flex flex-col gap-[2.8px]">
            <RoundButton>
              <ZoomIcon />
            </RoundButton>
            <RoundButton>
              <HandIcon />
            </RoundButton>
            <RoundButton>
              <Icon box="912 800 68 68" w={23} h={23}>
                <circle cx="928" cy="822" r="10" stroke={INK} strokeWidth="4" />
                <circle cx="957" cy="818" r="14" stroke={INK} strokeWidth="4" />
                <circle cx="928" cy="822" r="3" fill={INK} />
                <circle cx="957" cy="818" r="4" fill={INK} />
                <path d="M926 833H950" stroke={INK} strokeWidth="4" />
                <rect x="932" y="843" width="24" height="19" stroke={INK} strokeWidth="4" />
                <path d="M922 843V853H930M975 844V862L962 853Z" stroke={INK} strokeWidth="3.5" />
              </Icon>
            </RoundButton>
            <RoundButton>
              <Icon box="0 0 22 22" w={22} h={22}>
                <path d="M1 1H21V21H1ZM7.7 1V21M14.3 1V21M1 7.7H21M1 14.3H21" stroke={INK} strokeWidth="1.4" />
              </Icon>
            </RoundButton>
          </div>
        </div>
      </div>
    </section>
  );
}

/* ---------- UV / image editor ---------- */

function ToggleWithMenu({ children }: { children: ReactNode }) {
  return (
    <div className="flex h-[24px] w-[48px] items-center overflow-hidden rounded-[5px] bg-[#06080b]">
      <div className="flex h-full w-[23px] items-center justify-center bg-[#24466f]">{children}</div>
      <div className="flex flex-1 justify-center">
        <Chevron />
      </div>
    </div>
  );
}

function ImageEditor() {
  return (
    <section className="relative flex h-[666px] flex-1 flex-col overflow-hidden rounded-[6px] bg-[#1a2027]">
      <header className="flex h-[31px] shrink-0 items-center bg-[#131b22] pl-[10px] pr-[10px] pt-px">
        <div className="flex h-[23px] w-[38px] items-center justify-center gap-[3px] rounded-[4px] bg-[#06080b]">
          <UvIcon />
          <Chevron />
        </div>
        <span className="ml-[16px]">视图</span>
        <span className="ml-[18.5px]">图像</span>
        <div className="ml-[128.5px] flex h-[24px] w-[188px] overflow-hidden rounded-[5px] border border-[#1a2536] bg-[#0c1016]">
          <div className="flex w-[37px] items-center justify-center gap-[3px] bg-[#06080b]">
            <Icon box="0 0 20 20" w={20} h={20}>
              <path d="M1 12V1H18.5V18.5H16" stroke={INK} strokeWidth="1.5" />
              <path d="M1 19.5L7 9L13 19.5Z" fill={INK} />
              <circle cx="13.5" cy="6.3" r="2.2" fill={INK} />
            </Icon>
            <Chevron />
          </div>
          <div className="flex w-[75px] items-center border-l border-[#1a2536] pl-[9px]">
            <Icon box="0 0 12 12" w={12} h={12}>
              <path d="M6 0V12M0 6H12" stroke={INK} strokeWidth="1.4" />
            </Icon>
            <span className="ml-[13px]">新建</span>
          </div>
          <div className="flex flex-1 items-center border-l border-[#1a2536] pl-[5px]">
            <Icon box="0 0 20 18" w={20} h={18}>
              <path d="M0.5 0.5H9L10.5 2H19V5H0.5ZM0.5 6.5H19V18H0.5Z" fill={INK} />
            </Icon>
            <span className="ml-[9px]">打开</span>
          </div>
        </div>
        <div className="ml-[10px]">
          <PinIcon />
        </div>
        <div className="ml-auto flex gap-[8px]">
          <ToggleWithMenu>
            <Icon box="0 0 22 22" w={22} h={22}>
              <path d="M2 4.5C11 4.5 17.5 10.5 17.5 20M5 16L18.5 3M13.5 2.2H19.3V8" stroke="#fff" strokeWidth="1.5" />
              <circle cx="4.2" cy="17.2" r="2.2" stroke="#fff" strokeWidth="1.4" fill="#24466f" />
            </Icon>
          </ToggleWithMenu>
          <ToggleWithMenu>
            <OverlayIcon />
          </ToggleWithMenu>
        </div>
      </header>
      <div className="relative flex flex-1 justify-end">
        <svg className="absolute inset-0" width="783" height="635" viewBox="907 33 783 635" fill="none">
          <rect x="1007.5" y="95.5" width="512" height="512" fill="#454546" />
          <g stroke="#4b4b4c">
            {Array.from({ length: 63 }, (_, i) => (
              <path key={i} d={`M${1015.5 + i * 8} 96V607M1008 ${103.5 + i * 8}H1519`} />
            ))}
          </g>
          <g stroke="#636465">
            {Array.from({ length: 7 }, (_, i) => (
              <path key={i} d={`M${1071.5 + i * 64} 96V607M1008 ${159.5 + i * 64}H1519`} />
            ))}
          </g>
          <rect x="1007.5" y="95.5" width="512" height="512" stroke="#55595e" />
          <g transform="translate(1007.5 607.3)">
            <path d="M-25 0H-6M6 0H25M0 -24V-6M0 6V24" stroke="#000" strokeWidth="1.2" />
            <circle r="12.2" stroke="#fff" strokeWidth="1.3" />
            <circle r="12.2" stroke="#f00c0c" strokeWidth="1.3" strokeDasharray="4.8 4.8" />
          </g>
          <path d="M906 52H911Q915 52 915 56V65Q915 69 911 69H906Z" fill="#14181d" />
          <path d="M907.5 55.5L912 60L907.5 64.5M1689.5 55.5L1685 60L1689.5 64.5" stroke="#b9bcbf" strokeWidth="1.2" />
        </svg>
        <div className="relative mr-[10px] mt-[12px] flex flex-col gap-[3px]">
          <RoundButton>
            <ZoomIcon />
          </RoundButton>
          <RoundButton>
            <HandIcon />
          </RoundButton>
        </div>
      </div>
    </section>
  );
}

/* ---------- Geometry node editor ---------- */

type Shape = "circle" | "diamond" | "field" | "empty";

function Socket({ shape, color, side }: { shape: Shape; color: string; side: "left" | "right" }) {
  return (
    <svg className={`absolute top-1/2 -translate-y-1/2 ${side === "left" ? "-left-[10.5px]" : "-right-[10.5px]"}`} width="20" height="20" viewBox="-10 -10 20 20">
      {shape === "circle" && <circle r="7.9" fill={color} stroke="#0c1016" strokeWidth="1.6" />}
      {shape === "empty" && <circle r="8.4" fill="#333333" stroke="#858585" strokeWidth="1.6" />}
      {(shape === "diamond" || shape === "field") && <path d="M0 -9.6L9.6 0L0 9.6L-9.6 0Z" fill={color} stroke="#0c1016" strokeWidth="1.2" />}
      {shape === "field" && <circle r="2" fill="#0c1016" />}
    </svg>
  );
}

const GEO = "#00d6a3";
const VEC = "#6363c7";
const BOOL = "#cca6d6";

function Row({ side = "left", shape, color = "", children }: { side?: "left" | "right"; shape: Shape; color?: string; children?: ReactNode }) {
  return (
    <div className={`relative flex h-[37.4px] items-center pl-[17.5px] pr-[19.5px] ${side === "right" ? "justify-end" : ""}`}>
      {children}
      <Socket shape={shape} color={color} side={side} />
    </div>
  );
}

function Node({ place, head, title, selected, children }: { place: string; head: string; title: string; selected?: boolean; children: ReactNode }) {
  return (
    <div className={`absolute rounded-[7px] border bg-[#1b2636]/95 shadow-[0_3px_9px_2px_rgba(0,0,0,0.5)] ${selected ? "border-[#4166c4]" : "border-[#0d1622]"} ${place}`}>
      <div className={`flex h-[35px] items-center rounded-t-[6px] border-b border-black/20 ${head}`}>
        <Icon box="0 0 18 12" w={18} h={12}>
          <path d="M1.5 1.5L9 9.7L16.5 1.5" stroke={INK} strokeWidth="1.6" />
        </Icon>
        <span className="ml-[8px] whitespace-nowrap">{title}</span>
      </div>
      <div className="flex flex-col pt-[6px]">{children}</div>
    </div>
  );
}

function Links() {
  const geo = ["M298 894.3L434 898.7", "M684.4 856C752 856 824 919.5 900.7 919.5", "M1151 876.7L1321.3 889"];
  const field = ["M302 1079L483 1085.5", "M751 1042.3C800 1041 845 994 893 994"];
  const cols = Array.from({ length: 47 }, (_, i) => i);
  const rows = Array.from({ length: 17 }, (_, i) => i);
  return (
    <svg className="absolute inset-0" width="1687" height="607" viewBox="3 702 1687 607" fill="none">
      {rows.map((r) => cols.map((c) => <rect key={`${r}-${c}`} x={27 + c * 35.755} y={733.5 + r * 35.78} width="1.8" height="1.8" fill="#434b53" />))}
      {geo.map((d) => (
        <g key={d}>
          <path d={d} stroke="#0b1016" strokeWidth="6.5" />
          <path d={d} stroke={GEO} strokeWidth="4.2" />
        </g>
      ))}
      {field.map((d) => (
        <g key={d}>
          <path d={d} stroke="#0b1016" strokeWidth="4.4" strokeDasharray="18 7" />
          <path d={d} stroke="#cf6f95" strokeWidth="2.7" strokeDasharray="18 7" />
        </g>
      ))}
    </svg>
  );
}

function NodeHeader() {
  return (
    <header className="flex h-[31px] shrink-0 items-center bg-[#1c2a34] pl-[10px] pr-[10px] pt-px">
      <div className="flex h-[24px] w-[38px] items-center justify-center gap-[2px] rounded-[4px] bg-[#06080b]">
        <NodesIcon />
        <Chevron />
      </div>
      <div className="ml-[8px] flex h-[24px] w-[84px] items-center rounded-[4px] bg-[#06080b] pl-[9px] pr-[3px]">
        修改器
        <Chevron className="ml-auto" />
      </div>
      <div className="ml-[16px] flex w-[169.5px] justify-between">
        <span>视图</span>
        <span>选择</span>
        <span>添加</span>
        <span>节点</span>
      </div>
      <div className="ml-[350.5px] flex h-[24px] w-[276px] overflow-hidden rounded-[5px] bg-[#0c1117]">
        <div className="flex w-[39px] items-center justify-center gap-[2px] bg-[#06080b]">
          <GroupIcon />
          <Chevron />
        </div>
        <div className="flex w-[162px] items-center whitespace-nowrap pl-[9px] text-[14.3px] text-[#f0f0f0]">Geometry Nodes.002</div>
        <div className="flex w-[25px] items-center justify-center bg-[#1c2436]">
          <Icon box="0 0 18 20" w={18} h={20}>
            <path d="M9 1.2C11 3 14 3.5 17 3.5V9C17 14 13 17.5 9 19C5 17.5 1 14 1 9V3.5C4 3.5 7 3 9 1.2Z" stroke="#8a909b" strokeWidth="1.2" />
          </Icon>
        </div>
        <div className="flex w-[25px] items-center justify-center">
          <Icon box="0 0 20 20" w={20} h={20}>
            <path d="M6 1H13.5L18.5 6V14.5H6ZM13 1V6.5H18.5" stroke={INK} strokeWidth="1.5" />
            <path d="M3.5 5H1V18.5H13.5V16.5" stroke={INK} strokeWidth="1.4" />
          </Icon>
        </div>
        <div className="flex flex-1 items-center justify-center border-l border-[#1c2a34]">
          <Icon box="0 0 12 12" w={12} h={12}>
            <path d="M1 1L11 11M11 1L1 11" stroke={INK} strokeWidth="1.5" />
          </Icon>
        </div>
      </div>
      <div className="ml-[10px]">
        <PinIcon />
      </div>
      <div className="ml-auto flex items-center">
        <div className="flex h-[24px] w-[23px] items-center justify-center rounded-[4px] bg-[#161f28]">
          <Icon box="0 0 16 18" w={16} h={18}>
            <path d="M2 6L6 1.5L10 6M6 2V13Q6 16.5 9.5 16.5H14" stroke="#4d5761" strokeWidth="1.4" />
          </Icon>
        </div>
        <div className="ml-[8px] flex h-[24px] w-[63px] items-center overflow-hidden rounded-[5px] bg-[#06080b]">
          <div className="flex h-full w-[24px] items-center justify-center bg-[#1c2436]">
            <MagnetIcon />
          </div>
          <Icon box="0 0 20 20" w={20} h={20} className="ml-[4px]">
            <path d="M4.5 9V19M14 1V19M8 5H19M1 14.5H19" stroke="#85898d" strokeWidth="1.5" />
            <rect x="1" y="1.5" width="7" height="7" fill={INK} />
          </Icon>
          <Chevron className="ml-[3px]" />
        </div>
        <div className="ml-[8px]">
          <ToggleWithMenu>
            <OverlayIcon />
          </ToggleWithMenu>
        </div>
        <div className="ml-[21px] flex h-[24px] w-[23px] items-center justify-center rounded-[5px] bg-[#1a2030]">
          <FilterIcon />
        </div>
        <div className="ml-[9px] flex h-[24px] w-[24px] items-center justify-center rounded-[5px] bg-[#0d1218]">
          <GearIcon />
        </div>
      </div>
    </header>
  );
}

function Crumb({ className = "" }: { className?: string }) {
  return (
    <Icon box="0 0 8 13" w={8} h={13} className={className}>
      <path d="M1 1.2L6 6.5L1 11.8" stroke={INK} strokeWidth="1.5" />
    </Icon>
  );
}

function NodeEditor() {
  return (
    <section className="flex h-[638px] flex-col overflow-hidden rounded-[6px] bg-[#131a21]">
      <NodeHeader />
      <div className="relative flex-1">
        <Links />
        <div className="relative flex h-[54px] items-center pl-[3px] text-[14.2px] [text-shadow:0_1px_2px_#000]">
          <svg width="8" height="12" viewBox="0 0 8 12" fill="none" className="-ml-[3px] mr-[14px]">
            <path d="M1 1.5L5 6L1 10.5" stroke="#a5a8ab" strokeWidth="1.2" />
          </svg>
          <ObjectIcon />
          <span className="ml-[10px] w-[90px]">Suzanne.001</span>
          <Crumb className="ml-[21px]" />
          <span className="ml-[11px] flex">
            <NodesIcon />
          </span>
          <span className="ml-[9px] w-[110px]">GeometryNodes</span>
          <Crumb className="ml-[21px]" />
          <span className="ml-[11px] flex">
            <GroupIcon />
          </span>
          <span className="ml-[9px] whitespace-nowrap">Geometry Nodes.002</span>
        </div>
        <div className="text-[20px] leading-none text-[#e6e6e6]">
          <Node place="left-[44px] top-[132px] w-[251.5px] h-[124px]" head="pl-[18px] bg-[#1b222a]" title="组输入">
            <Row side="right" shape="circle" color={GEO}>几何数据</Row>
            <Row side="right" shape="empty" />
          </Node>
          <Node place="left-[430px] top-[93px] w-[251.5px] h-[168px]" head="pl-[18px] pt-px bg-[#14645c]" title="拆分边">
            <Row side="right" shape="circle" color={GEO}>网格</Row>
            <div className="h-[5.6px]" />
            <Row shape="circle" color={GEO}>网格</Row>
            <Row shape="field" color={BOOL}>选中项</Row>
          </Node>
          <Node place="left-[897px] top-[114px] w-[251.5px] h-[346px]" head="pl-[16.5px] bg-[#14645c]" title="设置位置">
            <Row side="right" shape="circle" color={GEO}>几何数据</Row>
            <div className="h-[5.6px]" />
            <Row shape="circle" color={GEO}>几何数据</Row>
            <Row shape="field" color={BOOL}>选中项</Row>
            <Row shape="diamond" color={VEC}>位置</Row>
            <Row shape="field" color={VEC}>偏移量:</Row>
            <div className="-mt-[1px] ml-[16px] flex h-[104px] w-[215px] flex-col justify-around rounded-[4px] bg-[#10131d] pl-[28px] pr-[25px] text-[19.5px]">
              {["X", "Y", "Z"].map((axis) => (
                <div key={axis} className="flex justify-between">
                  <span>{axis}</span>
                  <span>0 m</span>
                </div>
              ))}
            </div>
          </Node>
          <Node place="left-[1318px] top-[126px] w-[252px] h-[125px]" head="pl-[16.5px] pt-px bg-[#1b222a]" title="组输出">
            <Row shape="circle" color={GEO}>几何数据</Row>
            <Row shape="empty" />
          </Node>
          <Node place="left-[40px] top-[316px] w-[251.5px] h-[210px]" head="pl-[17px] pt-px bg-[#6b283d]" title="已命名属性">
            <Row side="right" shape="diamond" color={VEC}>属性</Row>
            <Row side="right" shape="diamond" color={BOOL}>存在</Row>
            <div className="ml-[17px] mt-[12.5px] flex h-[33px] w-[213px] items-center justify-between rounded-[5px] bg-[#04060a] pl-[13px] pr-[5px]">
              矢量
              <Icon box="0 0 12 8" w={12} h={8}>
                <path d="M1 1.2L6 6.3L11 1.2" stroke={INK} strokeWidth="1.7" />
              </Icon>
            </div>
            <div className="h-[3.5px]" />
            <Row shape="circle" color="#70b2ff">
              名称
              <span className="-mr-px ml-auto flex h-[35px] w-[121px] items-center rounded-[6px] bg-[#0b0e15] pl-[14px] text-[#f2f2f2]">UVMap</span>
            </Row>
          </Node>
          <Node place="left-[488px] top-[280px] w-[252.5px] h-[243px]" head="pl-[18px] bg-[#1f3a78]" title="拼排UV孤岛" selected>
            <Row side="right" shape="diamond" color={VEC}>
              UV
            </Row>
            <div className="h-[5.9px]" />
            <Row shape="diamond" color={VEC}>UV</Row>
            <Row shape="field" color={BOOL}>选中项</Row>
            <Row shape="circle" color="#a1a1a1">
              <span className="-ml-px flex h-[34px] flex-1 items-center justify-between rounded-[4px] bg-[#10131d] pl-[28px] pr-[25px]">
                <span>边距</span>
                <span>0.001</span>
              </span>
            </Row>
            <Row shape="circle" color={BOOL}>
              <span className="-ml-px mr-[6px] h-[24.5px] w-[24.5px] rounded-[5px] border border-[#1a1a1c] bg-[#0b0b0c]" />
              旋转
            </Row>
          </Node>
        </div>
        <div className="absolute bottom-0 left-[10px] right-[7px] h-[4px] rounded-[2px] bg-[#1f2831]" />
        <div className="absolute bottom-[6px] right-0 top-[11px] w-[6px] rounded-[3px] bg-[#1b2530]" />
        <svg className="absolute right-0 top-[20px]" width="7" height="14" viewBox="0 0 7 14" fill="none">
          <path d="M6 2L2 7L6 12" stroke="#b9bcbf" strokeWidth="1.2" />
        </svg>
      </div>
    </section>
  );
}

export default function App() {
  return (
    <main className="flex h-[1310px] w-[1690px] flex-col gap-[3px] overflow-hidden bg-[#0a0d11] pl-[3px] pt-[2px] font-['Inter','Noto_Sans_CJK_SC',sans-serif] text-[14.2px] leading-none tabular-nums text-[#dcdcdc]">
      <div className="flex gap-[3px]">
        <Viewport />
        <ImageEditor />
      </div>
      <NodeEditor />
    </main>
  );
}
